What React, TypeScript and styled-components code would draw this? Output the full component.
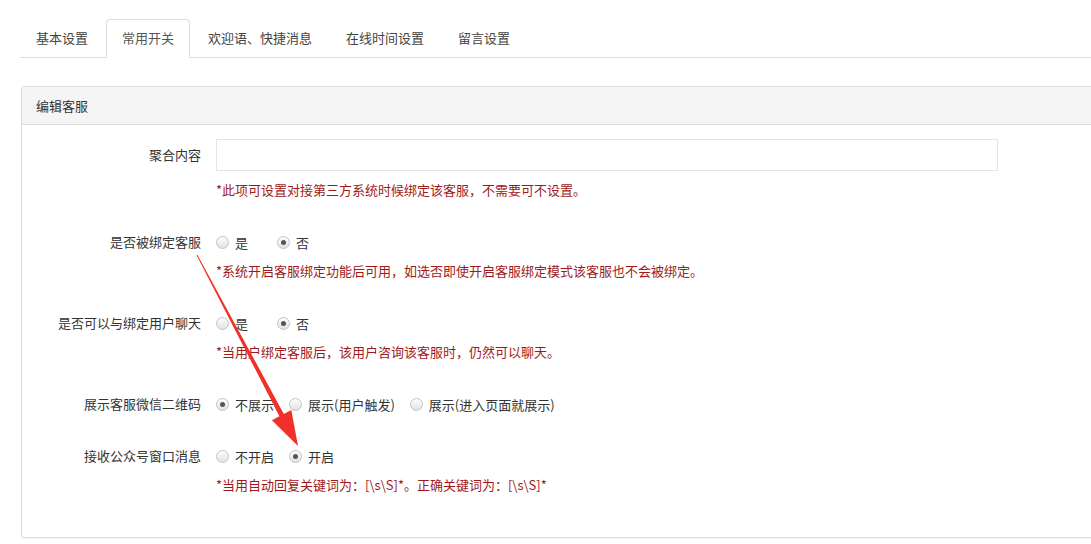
import React from "react";
import styled, { createGlobalStyle } from "styled-components";

const GlobalStyle = createGlobalStyle`
  html, body {
    margin: 0;
    padding: 0;
    background: #fff;
    overflow: hidden;
  }
  body {
    font-family: "Noto Sans CJK SC", "Liberation Sans", sans-serif;
    font-size: 13px;
    color: #333;
  }
`;

const Page = styled.div`
  position: relative;
  width: 1091px;
  height: 544px;
  padding: 19px 0 0 20px;
  box-sizing: border-box;
`;

const TabBar = styled.div`
  display: flex;
  height: 38px;
  border-bottom: 1px solid #ddd;
`;

const Tab = styled.div<{ active?: boolean }>`
  display: flex;
  align-items: center;
  padding: 0 15px 3px;
  margin-right: 2px;
  height: 39px;
  margin-bottom: -1px;
  box-sizing: border-box;
  color: ${(p) => (p.active ? "#555" : "#444")};
  background: ${(p) => (p.active ? "#fff" : "transparent")};
  border: 1px solid ${(p) => (p.active ? "#ddd" : "transparent")};
  border-bottom-color: ${(p) => (p.active ? "#fff" : "transparent")};
  border-radius: 4px 4px 0 0;
`;

const Panel = styled.div`
  margin-top: 28px;
  margin-left: 1px;
  width: 1090px;
  border: 1px solid #ddd;
  border-radius: 3px;
  box-shadow: 0 1px 1px rgba(0, 0, 0, 0.04);
`;

const PanelHeader = styled.div`
  height: 37px;
  display: flex;
  align-items: center;
  padding-left: 14px;
  background: #f5f5f5;
  border-bottom: 1px solid #ddd;
`;

const PanelBody = styled.div`
  padding: 14px 0 42px;
`;

const FormGroup = styled.div`
  display: grid;
  grid-template-columns: 194px 1fr;
  margin-bottom: 32px;
  &:last-child {
    margin-bottom: 0;
  }
`;

const Label = styled.div<{ tall?: boolean }>`
  text-align: right;
  padding-right: 15px;
  height: ${(p) => (p.tall ? "32px" : "20px")};
  line-height: ${(p) => (p.tall ? "31px" : "19px")};
  color: #333;
`;

const Control = styled.div`
  display: flex;
  flex-direction: column;
`;

const Input = styled.input`
  width: 782px;
  height: 32px;
  box-sizing: border-box;
  border: 1px solid #e5e5e5;
  outline: none;
  padding: 0 10px;
`;

const Help = styled.div`
  margin-top: 9px;
  line-height: 19px;
  height: 20px;
  color: #a0191a;
`;

const RadioRow = styled.div`
  display: flex;
  height: 20px;
  align-items: center;
`;

const RadioItem = styled.label`
  display: flex;
  align-items: center;
  min-width: 46px;
  margin-right: 15px;
  color: #333;
`;

const Dot = styled.span<{ checked?: boolean }>`
  position: relative;
  width: 13px;
  height: 13px;
  margin-right: 6px;
  border-radius: 50%;
  box-sizing: border-box;
  border: 1px solid #c4c4c4;
  background: linear-gradient(#fdfdfd, #e2e2e2);
  &::after {
    content: "";
    display: ${(p) => (p.checked ? "block" : "none")};
    position: absolute;
    left: 3px;
    top: 3px;
    width: 5px;
    height: 5px;
    border-radius: 50%;
    background: #555;
  }
`;

const Arrow = styled.svg`
  position: absolute;
  left: 0;
  top: 0;
  pointer-events: none;
`;

type Option = { text: string; checked?: boolean };

const Radios = ({ options }: { options: Option[] }) => (
  <RadioRow>
    {options.map((o) => (
      <RadioItem key={o.text}>
        <Dot checked={o.checked} />
        {o.text}
      </RadioItem>
    ))}
  </RadioRow>
);

const tabs = ["基本设置", "常用开关", "欢迎语、快捷消息", "在线时间设置", "留言设置"];

const App = () => {
  return (
    <Page>
      <GlobalStyle />
      <TabBar>
        {tabs.map((t, i) => (
          <Tab key={t} active={i === 1}>
            {t}
          </Tab>
        ))}
      </TabBar>
      <Panel>
        <PanelHeader>编辑客服</PanelHeader>
        <PanelBody>
          <FormGroup>
            <Label tall>聚合内容</Label>
            <Control>
              <Input />
              <Help>*此项可设置对接第三方系统时候绑定该客服，不需要可不设置。</Help>
            </Control>
          </FormGroup>
          <FormGroup>
            <Label>是否被绑定客服</Label>
            <Control>
              <Radios options={[{ text: "是" }, { text: "否", checked: true }]} />
              <Help>*系统开启客服绑定功能后可用，如选否即使开启客服绑定模式该客服也不会被绑定。</Help>
            </Control>
          </FormGroup>
          <FormGroup>
            <Label>是否可以与绑定用户聊天</Label>
            <Control>
              <Radios options={[{ text: "是" }, { text: "否", checked: true }]} />
              <Help>*当用户绑定客服后，该用户咨询该客服时，仍然可以聊天。</Help>
            </Control>
          </FormGroup>
          <FormGroup>
            <Label>展示客服微信二维码</Label>
            <Control>
              <Radios
                options={[
                  { text: "不展示", checked: true },
                  { text: "展示(用户触发)" },
                  { text: "展示(进入页面就展示)" },
                ]}
              />
            </Control>
          </FormGroup>
          <FormGroup>
            <Label>接收公众号窗口消息</Label>
            <Control>
              <Radios options={[{ text: "不开启" }, { text: "开启", checked: true }]} />
              <Help>*当用自动回复关键词为：[\s\S]*。正确关键词为：[\s\S]*</Help>
            </Control>
          </FormGroup>
        </PanelBody>
      </Panel>
      <Arrow width="1091" height="544" viewBox="0 0 1091 544">
        <polygon
          points="196.6,255.2 197.4,254.8 283.8,414.0 291.3,410.0 298,446 271.9,420.2 279.4,416.2"
          fill="#f0312a"
        />
      </Arrow>
    </Page>
  );
};

export default App;
